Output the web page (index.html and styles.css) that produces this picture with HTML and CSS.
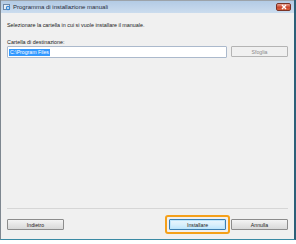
FILE: index.html
```html
<!DOCTYPE html>
<html>
<head>
    <title>Programma di installazione manuali</title>
    <link rel="stylesheet" href="styles.css">
</head>
<body>
    <div class="window">
        <div class="titlebar">
            <svg class="app-icon" width="8" height="8" viewBox="0 0 8 8">
                <rect x="0.5" y="1.5" width="6" height="5" fill="#e8eef5" stroke="#6d87a6"/>
                <circle cx="5" cy="5" r="2.2" fill="#3d8ad6"/>
                <path d="M4 5h2M5 4v2" stroke="#fff" stroke-width="0.8"/>
            </svg>
            <span class="title">Programma di installazione manuali</span>
            <div class="close">
                <svg width="8" height="6" viewBox="0 0 8 6">
                    <path d="M2 1l4 4M6 1l-4 4" stroke="#fff" stroke-width="1.4"/>
                </svg>
            </div>
        </div>

        <div class="content">
            <p class="intro">Selezionare la cartella in cui si vuole installare il manuale.</p>

            <div class="field">
                <label class="label">Cartella di destinazione:</label>
                <div class="path-row">
                    <div class="path-input"><span class="selected">C:\Program Files</span></div>
                    <button class="btn disabled">Sfoglia</button>
                </div>
            </div>

            <div class="footer">
                <button class="btn">Indietro</button>
                <div class="right-buttons">
                    <span class="highlight"><button class="btn default">Installare</button></span>
                    <button class="btn">Annulla</button>
                </div>
            </div>
        </div>
    </div>
</body>
</html>
```

FILE: styles.css
```css
body {
    margin: 0;
    background: #fff;
    font-family: "Liberation Sans", Arial, sans-serif;
}
.window {
    width: 293px;
    height: 239px;
    border-left: 1px solid #7e8790;
    border-right: 2px solid #2c6078;
    border-bottom: 1px solid #3a8aa4;
    background: #f0f0f0;
    display: flex;
    flex-direction: column;
}
.titlebar {
    height: 13px;
    box-sizing: border-box;
    border-top: 1px solid #9ca3aa;
    background: linear-gradient(#b3cbe5, #cbdcee);
    display: flex;
    align-items: center;
    padding: 0 2px;
}
.app-icon {
    margin-right: 2px;
}
.title {
    font-size: 6px;
    color: #1e2c3a;
    flex: 1;
}
.close {
    width: 15px;
    height: 8px;
    margin-right: 1px;
    border: 1px solid #7a3326;
    border-radius: 2px;
    box-sizing: border-box;
    background: linear-gradient(#e8a595, #c9452c 55%, #d7623f);
    display: flex;
    align-items: center;
    justify-content: center;
}
.content {
    flex: 1;
    padding: 7px 6px 5px 6px;
    display: flex;
    flex-direction: column;
}
.intro {
    margin: 2px 0 0 0;
    font-size: 5.4px;
    color: #222;
}
.field {
    margin-top: 11px;
}
.label {
    display: block;
    font-size: 5.4px;
    color: #222;
}
.path-row {
    display: flex;
    gap: 4px;
    margin-top: 1px;
}
.path-input {
    width: 220px;
    height: 12px;
    box-sizing: border-box;
    border: 1px solid #abb9cc;
    border-radius: 1px;
    background: #fff;
    padding: 1px;
    font-size: 5.2px;
    display: flex;
    align-items: center;
}
.selected {
    background: #3399ff;
    color: #fff;
    padding: 0 1px;
    line-height: 7px;
}
.btn {
    height: 11px;
    padding: 0;
    border: 1px solid #8c8c8c;
    border-radius: 1px;
    background: linear-gradient(#f4f4f4, #e6e6e6 50%, #d9d9d9);
    font-family: "Liberation Sans", Arial, sans-serif;
    font-size: 5.2px;
    color: #222;
    width: 57px;
}
.btn.disabled {
    border-color: #b4b4b4;
    background: #f0f0f0;
    color: #8a8a8a;
}
.footer {
    margin-top: auto;
    border-top: 1px solid #d6d6d6;
    padding-top: 6px;
    display: flex;
    justify-content: space-between;
    align-items: center;
}
.right-buttons {
    display: flex;
    align-items: center;
    gap: 1px;
}
.highlight {
    display: flex;
    padding: 2px;
    border: 2px solid #f5a01a;
    border-radius: 3px;
}
.btn.default {
    border-color: #3c7fb1;
    background: linear-gradient(#eaf6fd, #d9f0fc 50%, #bee6fd);
    box-shadow: inset 0 0 0 1px #bfe6fb;
}
```
